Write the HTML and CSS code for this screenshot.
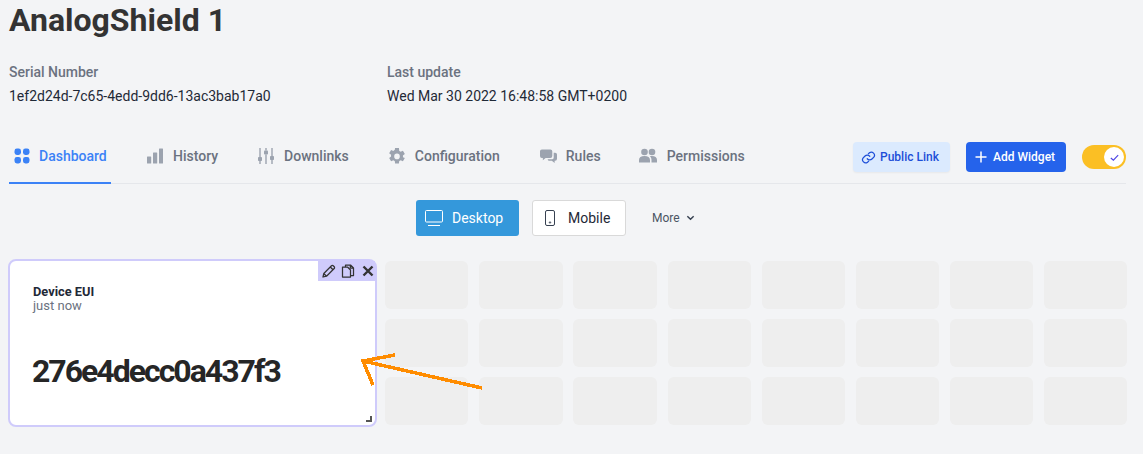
FILE: index.html
```html
<!DOCTYPE html>
<html lang="en">
<head>
<meta charset="utf-8">
<title>AnalogShield 1</title>
<link rel="stylesheet" href="styles.css">
</head>
<body>
<main class="page">
  <h1 class="title">AnalogShield 1</h1>
  <section class="meta">
    <div class="meta-col serial">
      <div class="meta-label">Serial Number</div>
      <div class="meta-value">1ef2d24d-7c65-4edd-9dd6-13ac3bab17a0</div>
    </div>
    <div class="meta-col">
      <div class="meta-label">Last update</div>
      <div class="meta-value">Wed Mar 30 2022 16:48:58 GMT+0200</div>
    </div>
  </section>
  <nav class="tabbar">
    <a class="tab tab-active tab-dashboard">
      <svg class="tab-icon" viewBox="0 0 16 16"><rect x="0.5" y="0.5" width="6.5" height="6.5" rx="2.4"/><rect x="9" y="0.5" width="6.5" height="6.5" rx="2.4"/><rect x="0.5" y="9" width="6.5" height="6.5" rx="2.4"/><rect x="9" y="9" width="6.5" height="6.5" rx="2.4"/></svg>
      Dashboard
    </a>
    <a class="tab tab-history">
      <svg class="tab-icon" viewBox="0 0 16 16"><rect x="0" y="8.5" width="4.2" height="7" rx=".5"/><rect x="6" y="4.5" width="4.2" height="11" rx=".5"/><rect x="12" y="0.5" width="4" height="15" rx=".5"/></svg>
      History
    </a>
    <a class="tab tab-downlinks">
      <svg class="tab-icon" viewBox="0 0 16 16"><path d="M1.3 0h1.4v9H1.3zM1.3 13h1.4v3H1.3zM7.3 0h1.4v2.5H7.3zM7.3 6.500h1.400V16H7.300zM13.300 0h1.400v8h-1.400zM13.300 12h1.400v4h-1.400z"/><rect x="0" y="9" width="4" height="4" rx=".8"/><rect x="6" y="2.500" width="4" height="4" rx=".8"/><rect x="12" y="8" width="4" height="4" rx=".8"/></svg>
      Downlinks
    </a>
    <a class="tab tab-config">
      <svg class="tab-icon" viewBox="2 2 20 20"><path fill-rule="evenodd" d="M19.400 13a7.600 7.600 0 0 0 0-2l2.400-1.900-2.400-4.200-2.900 1.200a7.500 7.500 0 0 0-1.700-1L14.400 1H9.600l-.4 3.100a7.500 7.500 0 0 0-1.700 1L4.600 3.900 2.200 8.100 4.600 10a7.600 7.600 0 0 0 0 2l-2.400 1.900 2.400 4.200 2.900-1.200a7.500 7.500 0 0 0 1.700 1l.4 3.100h4.800l.4-3.100a7.500 7.500 0 0 0 1.700-1l2.900 1.200 2.400-4.200zM12 15.500a3.500 3.500 0 1 1 0-7 3.500 3.500 0 0 1 0 7z" transform="translate(0 .5)"/></svg>
      Configuration
    </a>
    <a class="tab tab-rules">
      <svg class="tab-icon tab-icon-wide" viewBox="0 0 18 16"><path d="M2 1h9a2 2 0 0 1 2 2v5a2 2 0 0 1-2 2H6l-3 2.500V10H2a2 2 0 0 1-2-2V3a2 2 0 0 1 2-2z"/><path d="M14.500 4.500H16a2 2 0 0 1 2 2V11a2 2 0 0 1-2 2h-.5v2.500L12.500 13H9l-1-1.500h4.500a2 2 0 0 0 2-2z"/></svg>
      Rules
    </a>
    <a class="tab tab-perm">
      <svg class="tab-icon tab-icon-wider" viewBox="0 0 18 15"><circle cx="5.500" cy="4" r="3.300"/><circle cx="13" cy="4" r="3.300"/><path d="M0 14.500v-2.500c0-2.500 2-4 5.500-4s5.500 1.500 5.500 4v2.500zM12.500 14.500V12c0-1.500-.5-2.800-1.600-3.700.6-.2 1.300-.3 2.100-.3 3 0 5 1.500 5 4v2.500z"/></svg>
      Permissions
    </a>
    <div class="actions">
      <button class="btn btn-link">
        <svg class="btn-link-icon" viewBox="0 0 24 24"><path d="M10 14a5 5 0 0 0 7.500.5l3-3a5 5 0 0 0-7-7l-1.700 1.700"/><path d="M14 10a5 5 0 0 0-7.500-.5l-3 3a5 5 0 0 0 7 7l1.700-1.700"/></svg>
        Public Link
      </button>
      <button class="btn btn-add">
        <svg class="btn-add-icon" viewBox="0 0 12 12"><path d="M6 .5v11M.5 6h11"/></svg>
        Add Widget
      </button>
      <span class="toggle">
        <span class="toggle-knob">
          <svg class="toggle-check" viewBox="0 0 12 12"><path d="M2 6.500l2.800 2.500L10 3.500"/></svg>
        </span>
      </span>
    </div>
  </nav>
  <div class="views">
    <button class="view view-on">
      <svg class="view-icon" viewBox="0 0 20 17"><rect x=".5" y=".5" width="17" height="11.500" rx="1"/><path d="M3 15.500h12"/></svg>
      Desktop
    </button>
    <button class="view view-off">
      <svg class="view-icon-m" viewBox="0 0 10 16"><rect x=".5" y=".5" width="9" height="15" rx="1.500"/><circle cx="5" cy="12.500" r=".7"/></svg>
      Mobile
    </button>
    <button class="more">More
      <svg class="more-icon" viewBox="0 0 10 6"><path d="M1.500 1l3.500 3.500L8.500 1"/></svg>
    </button>
  </div>
  <section class="board">
    <article class="card">
      <div class="card-tools">
        <svg class="tool" viewBox="0 0 14 14"><path d="M1 13l.8-3.500L9.500 1.800a1.200 1.200 0 0 1 1.700 0l1 1a1.200 1.200 0 0 1 0 1.700L4.500 12.200zM8.300 3l2.700 2.700M1.800 9.500l2.700 2.700"/></svg>
        <svg class="tool" viewBox="0 0 14 14"><path d="M4.500 3V1h5l3 3v7.500h-3M9.300 1v3.200h3.200"/><path d="M1.500 3h5l3 3v7h-8z"/></svg>
        <svg class="tool tool-x" viewBox="0 0 12 12"><path d="M1.500 1.500l9 9M10.500 1.500l-9 9"/></svg>
      </div>
      <div class="card-name">Device EUI</div>
      <div class="card-time">just now</div>
      <div class="card-value">276e4decc0a437f3</div>
      <svg class="resize" viewBox="0 0 6 6"><path d="M6 0v6H0V4h4V0z"/></svg>
    </article>
    <div class="cell"></div><div class="cell"></div><div class="cell"></div><div class="cell"></div><div class="cell"></div><div class="cell"></div><div class="cell"></div><div class="cell"></div>
    <div class="cell"></div><div class="cell"></div><div class="cell"></div><div class="cell"></div><div class="cell"></div><div class="cell"></div><div class="cell"></div><div class="cell"></div>
    <div class="cell"></div><div class="cell"></div><div class="cell"></div><div class="cell"></div><div class="cell"></div><div class="cell"></div><div class="cell"></div><div class="cell"></div>
  </section>
</main>
<svg class="arrow" viewBox="0 0 1143 454"><path d="M482 388L363 361M395 355L363 361L373 385"/></svg>
</body>
</html>
```
FILE: styles.css
```css
* { box-sizing: border-box; }
html, body { margin: 0; height: 100%; }
body {
  background: #f3f4f6;
  font-family: Roboto, "Liberation Sans", sans-serif;
  color: #1f2937;
  overflow: hidden;
  position: relative;
}
.page { padding: 0 17px 0 9px; }
.title {
  margin: 0;
  height: 40px;
  line-height: 40px;
  font-size: 32px;
  font-weight: 700;
  color: #333;
}
.meta { display: flex; margin-top: 22px; }
.meta-col { display: flex; flex-direction: column; }
.serial { width: 378px; }
.meta-label { font-size: 14px; line-height: 20px; font-weight: 500; color: #6b7280; }
.meta-value { font-size: 14px; line-height: 20px; margin-top: 4px; color: #1f2937; }
.tabbar {
  display: flex;
  align-items: center;
  margin-top: 24px;
  height: 54px;
  border-bottom: 1px solid #e5e7eb;
  position: relative;
}
.tab {
  display: flex;
  align-items: center;
  height: 54px;
  margin-bottom: 2px;
  font-size: 14px;
  font-weight: 500;
  color: #6b7280;
  white-space: nowrap;
}
.tab-icon { width: 16px; height: 16px; fill: #9ca3af; margin-right: 10px; flex: none; }
.tab-icon-wide { width: 17px; margin-right: 9px; }
.tab-icon-wider { width: 18px; height: 15px; margin-right: 10px; }
.tab-active { color: #3b82f6; border-bottom: 2px solid #3b82f6; height: 54px; margin-top: 1px; margin-bottom: 0; padding: 0 4px 0 5px; width: 102px; }
.tab-active .tab-icon { fill: #3b82f6; margin-right: 9px; }
.tab-history { margin-left: 36px; }
.tab-downlinks { margin-left: 40px; }
.tab-config { margin-left: 40px; }
.tab-rules { margin-left: 40px; }
.tab-perm { margin-left: 38px; }
.actions { margin-left: auto; display: flex; align-items: center; margin-top: 1px; }
.btn {
  display: flex;
  align-items: center;
  border: 0;
  height: 30px;
  border-radius: 4px;
  font-family: inherit;
  font-size: 12px;
  font-weight: 500;
  white-space: nowrap;
}
.btn-link {
  width: 97px;
  background: #dbeafe;
  color: #1d4ed8;
  padding: 0 0 0 8px;
  box-shadow: 0 1px 2px rgba(0,0,0,.05);
}
.btn-link-icon { width: 15px; height: 15px; fill: none; stroke: #1d4ed8; stroke-width: 2; stroke-linecap: round; margin-right: 4px; }
.btn-add {
  width: 100px;
  margin-left: 16px;
  background: #2563eb;
  color: #fff;
  padding: 0 0 0 9px;
}
.btn-add-icon { width: 12px; height: 12px; fill: none; stroke: #fff; stroke-width: 1.500; margin-right: 6px; }
.toggle {
  margin-left: 16px;
  width: 44px;
  height: 24px;
  border-radius: 12px;
  background: #fbbf24;
  display: flex;
  align-items: center;
  justify-content: flex-end;
  padding-right: 2px;
}
.toggle-knob {
  width: 20px;
  height: 20px;
  border-radius: 50%;
  background: #fff;
  display: flex;
  align-items: center;
  justify-content: center;
}
.toggle-check { width: 11px; height: 11px; fill: none; stroke: #4f46e5; stroke-width: 1.300; }
.views { display: flex; align-items: center; padding-left: 407px; margin-top: 16px; height: 36px; }
.view {
  display: flex;
  align-items: center;
  height: 36px;
  border-radius: 3px;
  font-family: inherit;
  font-size: 14px;
  white-space: nowrap;
}
.view-on {
  width: 103px;
  background: #3498db;
  color: #fff;
  border: 0;
  padding: 0 0 0 9px;
}
.view-icon { width: 20px; height: 17px; fill: none; stroke: #fff; margin-right: 7px; }
.view-off {
  width: 94px;
  margin-left: 13px;
  background: #fff;
  color: #1f2937;
  border: 1px solid #d9d9d9;
  padding: 0 0 0 12px;
}
.view-icon-m { width: 10px; height: 16px; fill: none; stroke: #374151; margin-right: 13px; }
.more {
  display: flex;
  align-items: center;
  margin-left: 26px;
  background: none;
  border: 0;
  padding: 0;
  font-family: inherit;
  font-size: 12px;
  color: #4b5563;
}
.more-icon { width: 9px; height: 6px; margin-left: 6px; fill: none; stroke: #374151; stroke-width: 1.600; }
.board {
  display: grid;
  grid-template-columns: repeat(12, 1fr);
  grid-auto-rows: 48px;
  column-gap: 10.950px;
  row-gap: 10px;
  margin-top: 25px;
  width: 1118px;
}
.cell { background: #eeeeee; border-radius: 6px; }
.card {
  grid-column: span 4;
  grid-row: span 3;
  margin: -2px -2.500px -2px -1.500px;
  background: #fff;
  border: 2px solid #cfcbfb;
  border-radius: 8px;
  padding: 24px 0 0 23.500px;
  position: relative;
}
.card-tools {
  position: absolute;
  top: 0;
  right: 0;
  width: 57px;
  height: 20px;
  background: #cfcbfb;
  display: flex;
  align-items: center;
  padding-left: 4px;
  gap: 5px;
}
.tool { width: 14px; height: 14px; fill: none; stroke: #333; stroke-width: 1.250; stroke-linejoin: round; }
.tool-x { width: 12px; height: 12px; margin-left: 2px; stroke-width: 2.400; }
.card-name { font-size: 12.800px; line-height: 14px; font-weight: 700; color: #1f2937; }
.card-time { font-size: 13px; line-height: 14px; color: #6b7280; }
.card-value {
  margin-top: 40px;
  margin-left: -1px;
  font-size: 32px;
  line-height: 36px;
  font-weight: 700;
  letter-spacing: -2px;
  color: #262626;
  white-space: nowrap;
}
.resize { position: absolute; right: 3px; bottom: 3px; width: 6px; height: 6px; fill: #555; }
.arrow { position: absolute; left: 0; top: 0; width: 1143px; height: 454px; pointer-events: none; fill: none; stroke: #ff8c00; stroke-width: 3.500; shape-rendering: crispEdges; }
```
